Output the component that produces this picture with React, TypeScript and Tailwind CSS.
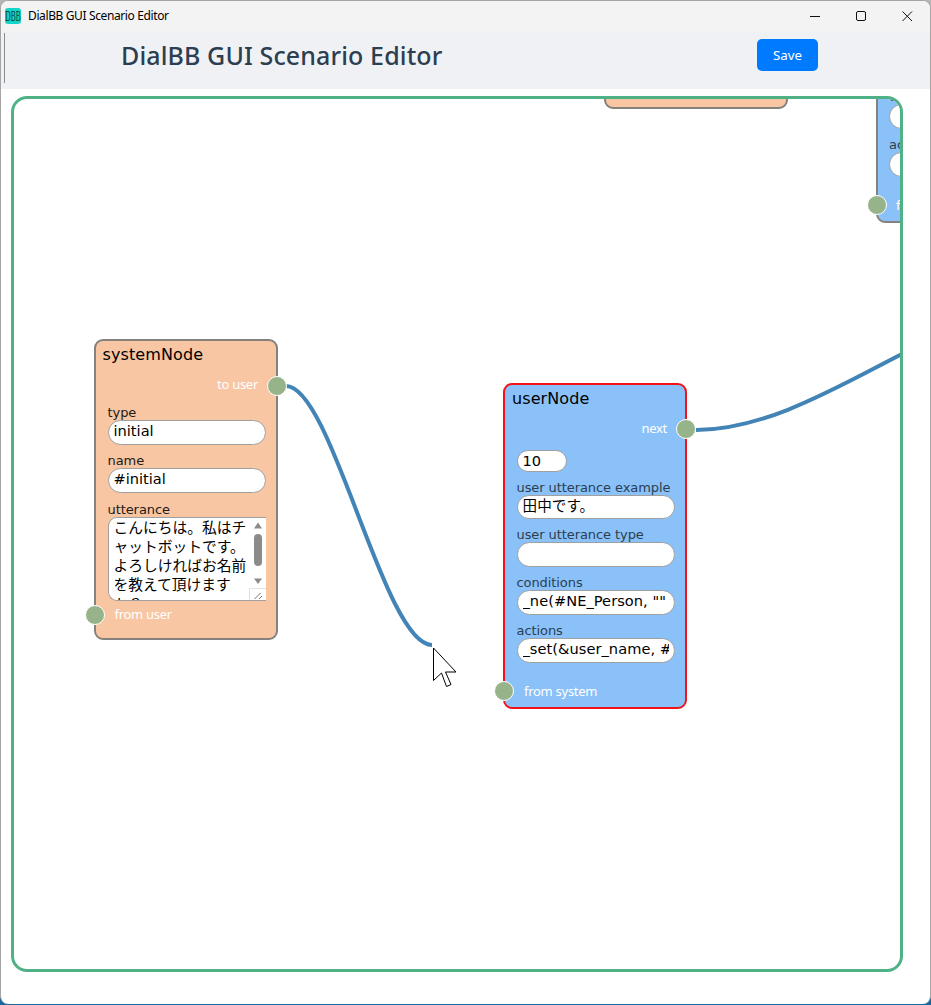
import type { ReactNode } from "react";

const nodeFont = "font-['DejaVu_Sans','Noto_Sans_CJK_JP',sans-serif]";
const uiFont = "font-['Noto_Sans','Noto_Sans_CJK_JP',sans-serif]";

function Socket({ className }: { className: string }) {
  return (
    <span
      className={`absolute size-5 rounded-full border border-white bg-[#96b38a] ${className}`}
    />
  );
}

function TextField({ value, className = "" }: { value: string; className?: string }) {
  return (
    <div
      className={`overflow-hidden rounded-full border border-[#a0a0a0] bg-white px-[5px] text-[14.6px] whitespace-nowrap text-black ${className}`}
    >
      <div className="overflow-hidden">{value || "\u00a0"}</div>
    </div>
  );
}

function Field({ label, value, tone, size }: { label: string; value: string; tone: string; size: string }) {
  return (
    <div className="flex flex-col">
      <span className={`h-[15px] text-[13px] leading-[15px] tracking-[-0.08px] whitespace-nowrap ${tone}`}>
        {label}
      </span>
      <TextField value={value} className={size} />
    </div>
  );
}

const systemField = { tone: "text-[#1d1a18]", size: "h-[25px] w-[158px] leading-[20px]" };
const userField = { tone: "text-[#2c3e50]", size: "h-[24.5px] w-[158px] leading-[19px] tracking-[0.05px]" };

function NodeCard({ className, children }: { className: string; children: ReactNode }) {
  return (
    <section className={`absolute flex w-[184px] flex-col rounded-[9px] border-2 ${nodeFont} ${className}`}>
      {children}
    </section>
  );
}

function PortLabel({ children, className }: { children: ReactNode; className: string }) {
  return (
    <div className={`text-[13px] leading-[18px] tracking-[-0.28px] text-white ${uiFont} ${className}`}>{children}</div>
  );
}

function SystemNode() {
  return (
    <NodeCard className="top-[240px] left-[80px] h-[301px] border-[#85817c] bg-[#f8c6a3]">
      <h2 className="h-[26px] pl-[6.5px] text-[16px] leading-[27px] tracking-[0.1px] text-black">systemNode</h2>
      <PortLabel className="mt-[8px] pr-[18px] text-right">to user</PortLabel>
      <div className="flex flex-col gap-[8.5px] pt-[11.5px] pl-[11.5px]">
        <Field label="type" value="initial" {...systemField} />
        <Field label="name" value="#initial" {...systemField} />
        <div className="flex flex-col">
          <span className="h-[15px] text-[13px] leading-[15px] tracking-[-0.08px] text-[#1d1a18]">utterance</span>
          <div className="flex h-[84px] w-[158px] overflow-hidden rounded-l-[9px] border border-r-0 border-[#a0a0a0] bg-white">
            <p className="w-[140px] pl-[5px] text-[14.75px] leading-[19.3px] whitespace-nowrap text-black">
              こんにちは。私はチ
              <br />
              ャットボットです。
              <br />
              よろしければお名前
              <br />
              を教えて頂けます
              <br />
              か？
            </p>
            <svg width="17" height="83" viewBox="0 0 17 83" className="shrink-0">
              <rect x="5" y="16" width="8" height="32" rx="4" fill="#8b8b8b" />
              <path d="M9 4.5 13 10.5H5Z M9 66 13 60.5H5Z" fill="#8b8b8b" />
              <path d="M.5 83V70.500H17" fill="none" stroke="#e2e2e2" />
              <path d="m5.500 81 6-6m-1.500 6 3-3" stroke="#666" strokeWidth="0.9" />
            </svg>
          </div>
        </div>
      </div>
      <PortLabel className="mt-[4.500px] pl-[18.500px]">from user</PortLabel>
      <Socket className="top-[35px] right-[-11px]" />
      <Socket className="top-[264px] left-[-11px]" />
    </NodeCard>
  );
}

function UserNode() {
  return (
    <NodeCard className="top-[284px] left-[489px] h-[326px] border-[#f21218] bg-[#8ac1f9]">
      <h2 className="h-[26px] pl-[7px] text-[16px] leading-[27px] tracking-[0.1px] text-black">userNode</h2>
      <PortLabel className="mt-[8px] pr-[18px] text-right">next</PortLabel>
      <div className="flex flex-col pt-[13px] pl-[11.500px]">
        <TextField value="10" className="h-[22px] w-[50px] leading-[20px]" />
        <div className="flex flex-col gap-[8.400px] pt-[7.500px]">
          <Field label="user utterance example" value="田中です。" {...userField} />
          <Field label="user utterance type" value="" {...userField} />
          <Field label="conditions" value={'_ne(#NE_Person, ""'} {...userField} />
          <Field label="actions" value="_set(&user_name, #" {...userField} />
        </div>
      </div>
      <PortLabel className="mt-[19px] pl-[19px]">from system</PortLabel>
      <Socket className="top-[34px] right-[-11px]" />
      <Socket className="top-[296px] left-[-11px]" />
    </NodeCard>
  );
}

function ClippedUserNode() {
  return (
    <NodeCard className="top-[-102px] left-[861.500px] h-[226px] justify-end border-[#85817c] bg-[#8ac1f9]">
      <div className="flex flex-col gap-[8.400px] pl-[11.500px]">
        <Field label="conditions" value="" {...userField} />
        <Field label="actions" value="" {...userField} />
      </div>
      <PortLabel className="mt-[19px] mb-[7.500px] pl-[18.500px]">from system</PortLabel>
      <Socket className="bottom-[6px] left-[-11px]" />
    </NodeCard>
  );
}

function Connections() {
  return (
    <svg className="absolute inset-0" width="886" height="870" fill="none" stroke="#4284b5" strokeWidth="4">
      <path d="M272 287C318 287 370 546 418 546" />
      <path d="M682 331C753 331 827 286 890 254" />
    </svg>
  );
}

function TitleBar() {
  return (
    <div className="flex h-[31px] shrink-0 items-center bg-[#f3f3f3] pb-[2px] pl-1">
      <svg width="16" height="16" viewBox="0 0 16 16" className="shrink-0">
        <rect width="16" height="16" rx="3" fill="#12d5c8" />
        <g transform="scale(0.62 1)">
          <text
            x="0.5"
            y="13"
            textLength="25"
            lengthAdjust="spacingAndGlyphs"
            fill="#063c3c"
            className="font-['Liberation_Serif',serif] text-[15px]"
          >
            DBB
          </text>
        </g>
      </svg>
      <span className="ml-[7px] flex-1 text-[12px] tracking-[-0.38px] text-black">DialBB GUI Scenario Editor</span>
      <svg width="120" height="16" viewBox="0 0 120 16" fill="none" stroke="#111" className="mr-[8px]">
        <path d="M8 8.500H18" />
        <rect x="54.500" y="3.500" width="9" height="9" rx="1.500" />
        <path d="m100.500 3.500 9.500 9.500m0-9.500-9.500 9.500" />
      </svg>
    </div>
  );
}

export default function App() {
  return (
    <div className={`h-[1005px] w-[931px] overflow-hidden bg-[linear-gradient(#b5b5b5_990px,#17699f_990px)] pb-px ${uiFont}`}>
      <main className="flex h-[1004px] w-[931px] flex-col overflow-hidden rounded-[8px] border border-b-0 border-[#a5a5a5] bg-white">
        <TitleBar />
        <header className="flex h-[57px] shrink-0 items-start justify-between bg-[#f0f1f5] pr-[112px] pl-[3px]">
          <div className="mt-px h-[50px] w-px bg-[#8b8b8d]" />
          <h1 className="ml-[116px] flex-1 text-[25px] leading-[46px] font-medium tracking-[0.12px] text-[#2c3e50]">
            DialBB GUI Scenario Editor
          </h1>
          <button className="mt-[7px] h-[32px] w-[61px] rounded-[5px] bg-[#007bff] pt-px text-[13.3px] text-white">
            Save
          </button>
        </header>
        <div className="relative mt-[7px] ml-[10px] h-[876px] w-[892px] shrink-0 overflow-hidden rounded-[16px] border-[3px] border-[#4fb286] bg-white">
          <NodeCard className="top-[-90px] left-[590px] h-[100px] border-[#85817c] bg-[#f8c6a3]">{null}</NodeCard>
          <ClippedUserNode />
          <Connections />
          <SystemNode />
          <UserNode />
          <svg className="absolute top-[547px] left-[418px]" width="28" height="44" viewBox="0 0 28 44">
            <path
              d="M1.500 2V34.500L9.500 27 14.500 40.500 19 38.500 13.500 26H24Z"
              fill="white"
              stroke="black"
            />
          </svg>
        </div>
      </main>
    </div>
  );
}
